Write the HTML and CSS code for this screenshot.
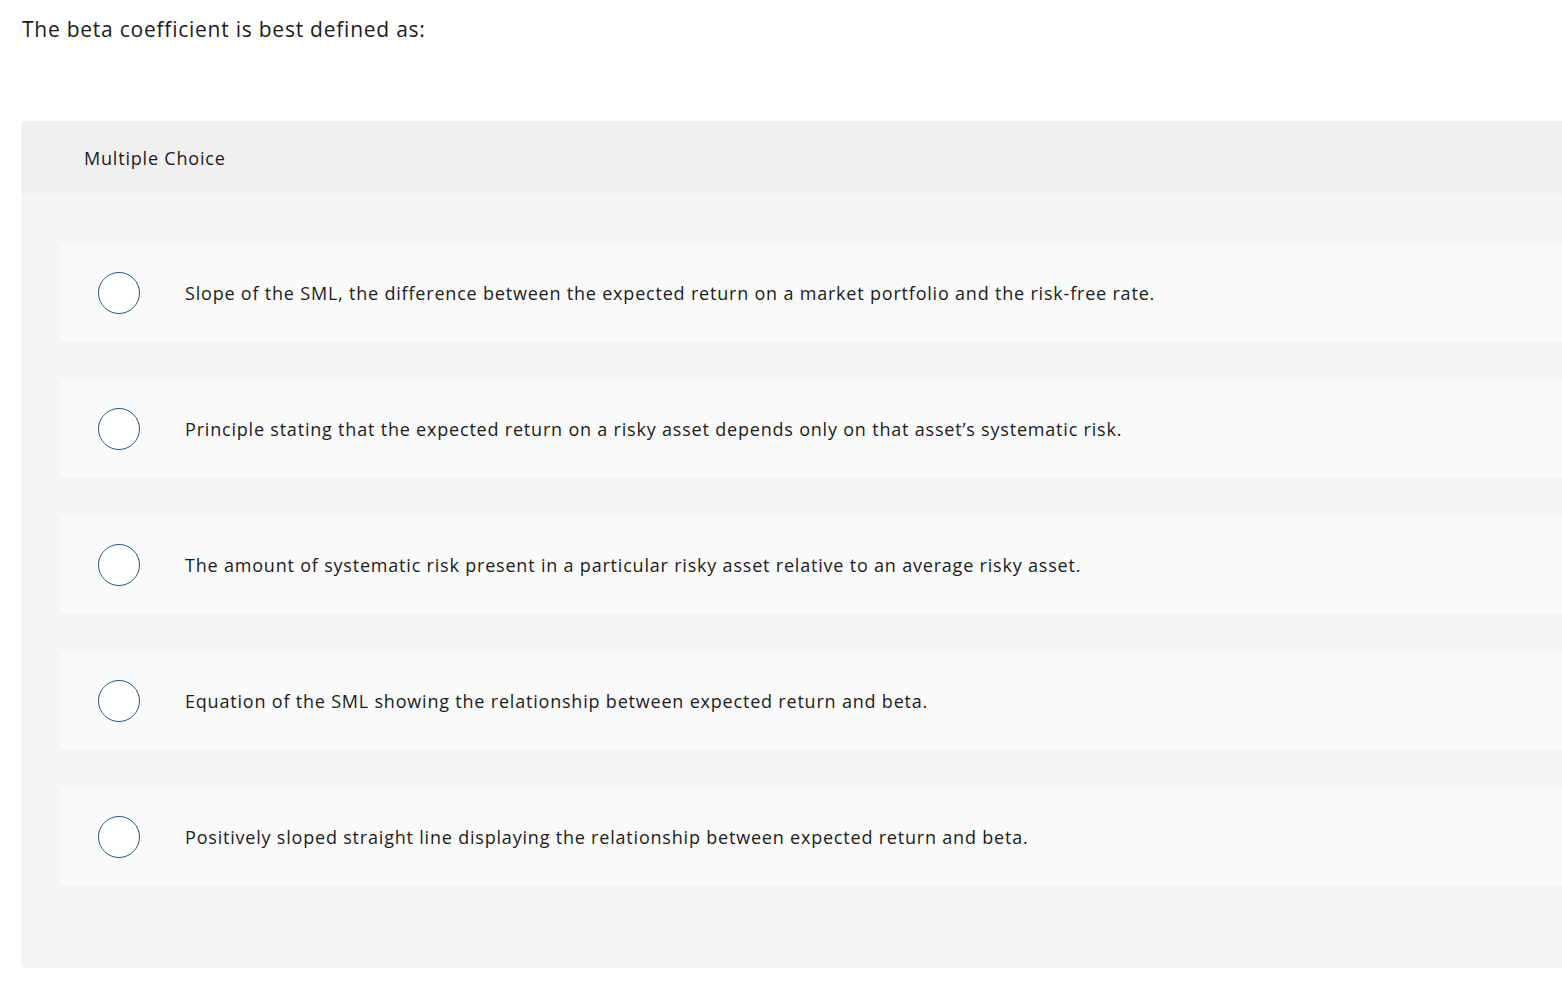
FILE: index.html
```html
<!DOCTYPE html>
<html lang="en">

<head>
    <meta charset="UTF-8">
    <meta name="viewport" content="width=device-width, initial-scale=1.0">
    <title>Multiple Choice</title>
    <link rel="stylesheet" href="styles.css">
</head>

<body>
    <p class="prompt">The beta coefficient is best defined as:</p>

    <div class="question">
        <div class="question-head">Multiple Choice</div>
        <div class="choices">
            <label class="choice">
                <input type="radio" name="answer" value="a"><span class="dot"></span>
                <span class="choice-text">Slope of the SML, the difference between the expected return on a market portfolio and the risk-free rate.</span>
            </label>
            <label class="choice">
                <input type="radio" name="answer" value="b"><span class="dot"></span>
                <span class="choice-text">Principle stating that the expected return on a risky asset depends only on that asset’s systematic risk.</span>
            </label>
            <label class="choice">
                <input type="radio" name="answer" value="c"><span class="dot"></span>
                <span class="choice-text">The amount of systematic risk present in a particular risky asset relative to an average risky asset.</span>
            </label>
            <label class="choice">
                <input type="radio" name="answer" value="d"><span class="dot"></span>
                <span class="choice-text">Equation of the SML showing the relationship between expected return and beta.</span>
            </label>
            <label class="choice">
                <input type="radio" name="answer" value="e"><span class="dot"></span>
                <span class="choice-text">Positively sloped straight line displaying the relationship between expected return and beta.</span>
            </label>
        </div>
    </div>
</body>

</html>
```

FILE: styles.css
```css
html {
    overflow: hidden;
}

body {
    margin: 0;
    padding: 0 0 0 21px;
    font-family: "Open Sans", Lato, sans-serif;
    letter-spacing: 0.05em;
    color: #1b1b1b;
    background: #fff;
}

.prompt {
    margin: 0;
    padding: 16px 0 0 1px;
    height: 105px;
    font-size: 21px;
    line-height: 26px;
    letter-spacing: 0.036em;
}

.question {
    width: 1600px;
    background-color: #f5f5f5;
    border-radius: 5px;
}

.question-head {
    height: 74px;
    padding-left: 63px;
    display: flex;
    align-items: center;
    background-color: #f0f0f0;
    border-radius: 5px 5px 0 0;
    font-size: 18px;
}

.choices {
    padding: 49px 0 82px 39px;
    display: flex;
    flex-direction: column;
    gap: 38px;
}

.choice {
    height: 98px;
    display: flex;
    align-items: center;
    background-color: #fafafa;
    border-radius: 5px;
    cursor: pointer;
}

.choice input {
    display: none;
}

.dot {
    width: 40px;
    height: 40px;
    margin-left: 38px;
    border: 1.5px solid #2b5585;
    border-radius: 50%;
    background: #fff;
    flex-shrink: 0;
}

.choice-text {
    margin-left: 45px;
    font-size: 18px;
}
```
